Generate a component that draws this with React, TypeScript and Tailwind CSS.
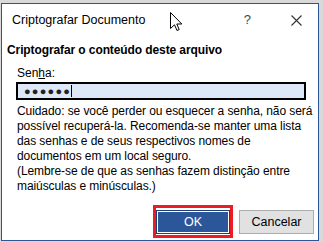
export default function App() {
  return (
    <div className="relative w-[323px] h-[242px] bg-[#d9d9d9] overflow-hidden font-['Liberation_Sans',Arial,sans-serif] text-[12px] text-black">
      <div className="ml-[1px] mt-[3px] w-[318px] h-[238px] border border-[#2b579a] bg-white flex flex-col">
        {/* title bar */}
        <div className="h-[31px] flex items-center pl-[10px] pr-[16px] pt-[1px]">
          <span className="text-[12.5px] leading-[15px]">Criptografar Documento</span>
          <span className="ml-auto mr-[40px] text-[#444] text-[13px]">?</span>
          <svg width="11" height="11" viewBox="0 0 11 11" className="text-[#333]">
            <path d="M0.5 0.5 L10.5 10.5 M10.5 0.5 L0.5 10.5" stroke="currentColor" strokeWidth="1.1" />
          </svg>
        </div>

        <div className="pl-[5px] mt-[8px] font-bold leading-[15px] tracking-[-0.1px]">Criptografar o conteúdo deste arquivo</div>

        <div className="pl-[15px] mt-[8px] leading-[15px]">
          Sen<span className="underline">h</span>a:
        </div>

        <div className="ml-[14px] mt-[1px] w-[290px] h-[18px] border-2 border-black bg-[#dde8f8] flex items-center pl-[6px]">
          <span className="text-[11px] tracking-[1.2px] text-[#222] leading-none">●●●●●●</span>
          <span className="w-px h-[12px] bg-black"></span>
        </div>

        <p className="pl-[15px] mt-[4px] leading-[15px] tracking-[-0.08px]">
          Cuidado: se você perder ou esquecer a senha, não será
          <br />
          possível recuperá-la. Recomenda-se manter uma lista
          <br />
          das senhas e de seus respectivos nomes de
          <br />
          documentos em um local seguro.
          <br />
          (Lembre-se de que as senhas fazem distinção entre
          <br />
          maiúsculas e minúsculas.)
        </p>

        <div className="mt-auto mb-[2px] flex items-start justify-end pr-[4px] gap-[6px]">
          <div className="border-[3px] border-[#ec1c24] pt-[2px] pb-[1px]">
            <button className="w-[74px] h-[24px] bg-[#2b579a] border border-[#1e3f73] shadow-[inset_0_0_0_1px_#ffffff] text-white text-[12.5px]">
              OK
            </button>
          </div>
          <button className="mt-[5px] w-[75px] h-[24px] bg-[#e1e1e1] border border-[#adadad] text-[12.5px]">Cancelar</button>
        </div>
      </div>

      {/* mouse pointer */}
      <svg className="absolute left-[170px] top-[12px]" width="13" height="20" viewBox="0 0 13 20">
        <path d="M0.5 0.5 L0.5 16.5 L4.5 12.8 L7 18.5 L9.2 17.5 L6.8 12 L11.8 12 Z" fill="white" stroke="black" strokeWidth="1" strokeLinejoin="miter" />
      </svg>
    </div>
  );
}
